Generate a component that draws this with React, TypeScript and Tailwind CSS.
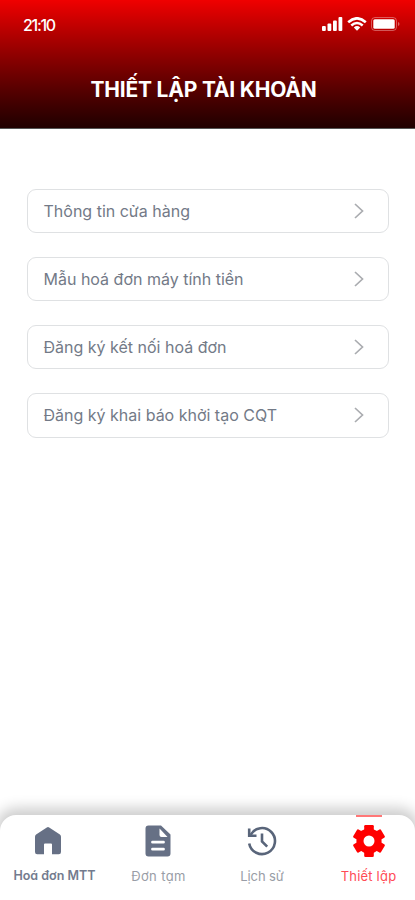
import type { ReactNode } from "react";

type TabItem = {
  label: string;
  icon: ReactNode;
  className: string;
  active?: boolean;
};

const menus = [
  "Thông tin cửa hàng",
  "Mẫu hoá đơn máy tính tiền",
  "Đăng ký kết nối hoá đơn",
  "Đăng ký khai báo khởi tạo CQT",
];

const HomeIcon = () => (
  <svg className="mr-[13px]" width="28" height="30" viewBox="0 0 28 30" fill="#667085">
    <path d="M12.8 1.4a2 2 0 0 1 2.4 0l10.700 7.100q1.100.9 1.100 2.300V26q0 2.200-2.200 2.200H18V18.500q0-1-1-1h-6q-1 0-1 1v9.700H3.200Q1 28.200 1 26V10.800q0-1.400 1.100-2.300Z" />
  </svg>
);

const DocumentIcon = () => (
  <svg className="mr-px" width="26" height="32" viewBox="0 0 26 32">
    <path
      d="M3.500 .5h12.500L25.500 9.500V28.500a3 3 0 0 1-3 3h-19a3 3 0 0 1-3-3v-25a3 3 0 0 1 3-3Z"
      fill="#667085"
    />
    <path d="M14.500 3.500v6.500q0 2 2 2H22.500Z" fill="white" />
    <path
      d="M7.500 17.200h11M7.500 24.200h11"
      stroke="white"
      strokeWidth="2.800"
      strokeLinecap="round"
    />
  </svg>
);

const HistoryIcon = () => (
  <svg
    width="30"
    height="30"
    viewBox="0 0 30 30"
    fill="none"
    stroke="#59657a"
    strokeWidth="2.600"
  >
    <path d="M2.200 17.500A13 13 0 1 0 3.600 8.800" />
    <path d="M2.200 2.500v7.200h7.300" />
    <path d="M15 7.500V15.500l5.200 5.200" />
  </svg>
);

const SettingIcon = () => (
  <svg width="32" height="32" viewBox="-16 -16 32 32" fill="#ff0000">
    <circle r="12.600" />
    <rect x="-4.800" y="-16" width="9.600" height="32" rx="1.200" />
    <rect x="-4.800" y="-16" width="9.600" height="32" rx="1.200" transform="rotate(60)" />
    <rect x="-4.800" y="-16" width="9.600" height="32" rx="1.200" transform="rotate(120)" />
    <circle r="5.500" fill="white" />
  </svg>
);

const tabs: TabItem[] = [
  {
    label: "Hoá đơn MTT",
    icon: <HomeIcon />,
    className: "w-[109px] text-[12.5px] text-[#737b8e] font-semibold",
  },
  {
    label: "Đơn tạm",
    icon: <DocumentIcon />,
    className: "w-[99px] text-[13px] text-[#999da6] tracking-[0.4px]",
  },
  {
    label: "Lịch sử",
    icon: <HistoryIcon />,
    className: "w-[108px] text-[13px] text-[#999da6] tracking-[-0.1px]",
  },
  {
    label: "Thiết lập",
    icon: <SettingIcon />,
    className: "w-[105px] text-[13px] text-[#ff4b55] tracking-[0.2px]",
    active: true,
  },
];

const StatusBar = () => {
  return (
    <div className="flex h-12 items-center justify-between pl-[23px] pr-[15px] text-white">
      <span className="pt-px text-base font-medium tracking-[-1.3px]">21:10</span>
      <div className="flex items-center">
        <svg width="21" height="14" viewBox="0 0 21 14" fill="white">
          <rect x="0" y="9" width="3.800" height="5" rx="1" />
          <rect x="5.500" y="6.500" width="3.800" height="7.500" rx="1" />
          <rect x="11" y="3.500" width="3.800" height="10.500" rx="1" />
          <rect x="16.500" y="0" width="3.800" height="14" rx="1" />
        </svg>
        <svg
          className="ml-1"
          width="20"
          height="14"
          viewBox="0 0 20 14"
          fill="none"
          stroke="white"
          strokeWidth="2.600"
        >
          <path d="M1.200 5.200Q10-2.600 18.800 5.200" />
          <path d="M4.300 8.400Q10 3.600 15.700 8.400" />
          <path d="M6.800 10.400Q10 7.800 13.200 10.400L10 13.700Z" fill="white" stroke="none" />
        </svg>
        <svg className="ml-1" width="29" height="14" viewBox="0 0 29 14">
          <rect
            x=".5"
            y=".5"
            width="25"
            height="13"
            rx="3.500"
            fill="none"
            stroke="white"
            strokeOpacity=".35"
          />
          <rect x="2.300" y="2.300" width="21.400" height="9.400" rx="1.500" fill="white" />
          <path d="M27 5v4q1.500-.5 1.500-2T27 5Z" fill="white" fillOpacity=".4" />
        </svg>
      </div>
    </div>
  );
};

const App = () => {
  return (
    <div className="flex h-[900px] w-[415px] flex-col overflow-hidden bg-white font-['Inter',sans-serif]">
      <header className="h-[129px] border-b border-[#555] bg-linear-to-b from-[#f00000] to-[#200000]">
        <StatusBar />
        <h1 className="mt-[27px] pr-2 text-center text-[21px] leading-[30px] font-bold tracking-[-0.2px] text-white">
          THIẾT LẬP TÀI KHOẢN
        </h1>
      </header>

      <main className="flex flex-1 flex-col gap-[23.7px] pt-[59.5px] pr-[26px] pl-[27px]">
        {menus.map((menu) => (
          <button
            key={menu}
            type="button"
            className="flex h-[44.5px] items-center justify-between rounded-[9px] border border-[#dfe1e3] pr-6 pl-[15.5px] text-base text-[#737a87]"
          >
            <span>{menu}</span>
            <svg width="10" height="16" viewBox="0 0 10 16" fill="none">
              <path d="m1 1 7.500 7L1 15" stroke="#aaacb0" strokeWidth="1.700" />
            </svg>
          </button>
        ))}
      </main>

      <nav className="flex h-[85px] rounded-t-[16px] bg-white shadow-[0_-3px_14px_4px_rgba(0,0,0,0.2)]">
        {tabs.map((tab) => (
          <div
            key={tab.label}
            className={`relative flex shrink-0 flex-col items-center leading-5 [font-feature-settings:'cv11'] ${tab.className}`}
          >
            {tab.active && (
              <span className="absolute top-0 h-[2px] w-[26px] bg-[#ff7777]" />
            )}
            <div className="mt-[7px] flex h-[38px] items-center">{tab.icon}</div>
            <span className="mt-[6px] whitespace-nowrap">{tab.label}</span>
          </div>
        ))}
      </nav>
    </div>
  );
};

export default App;
